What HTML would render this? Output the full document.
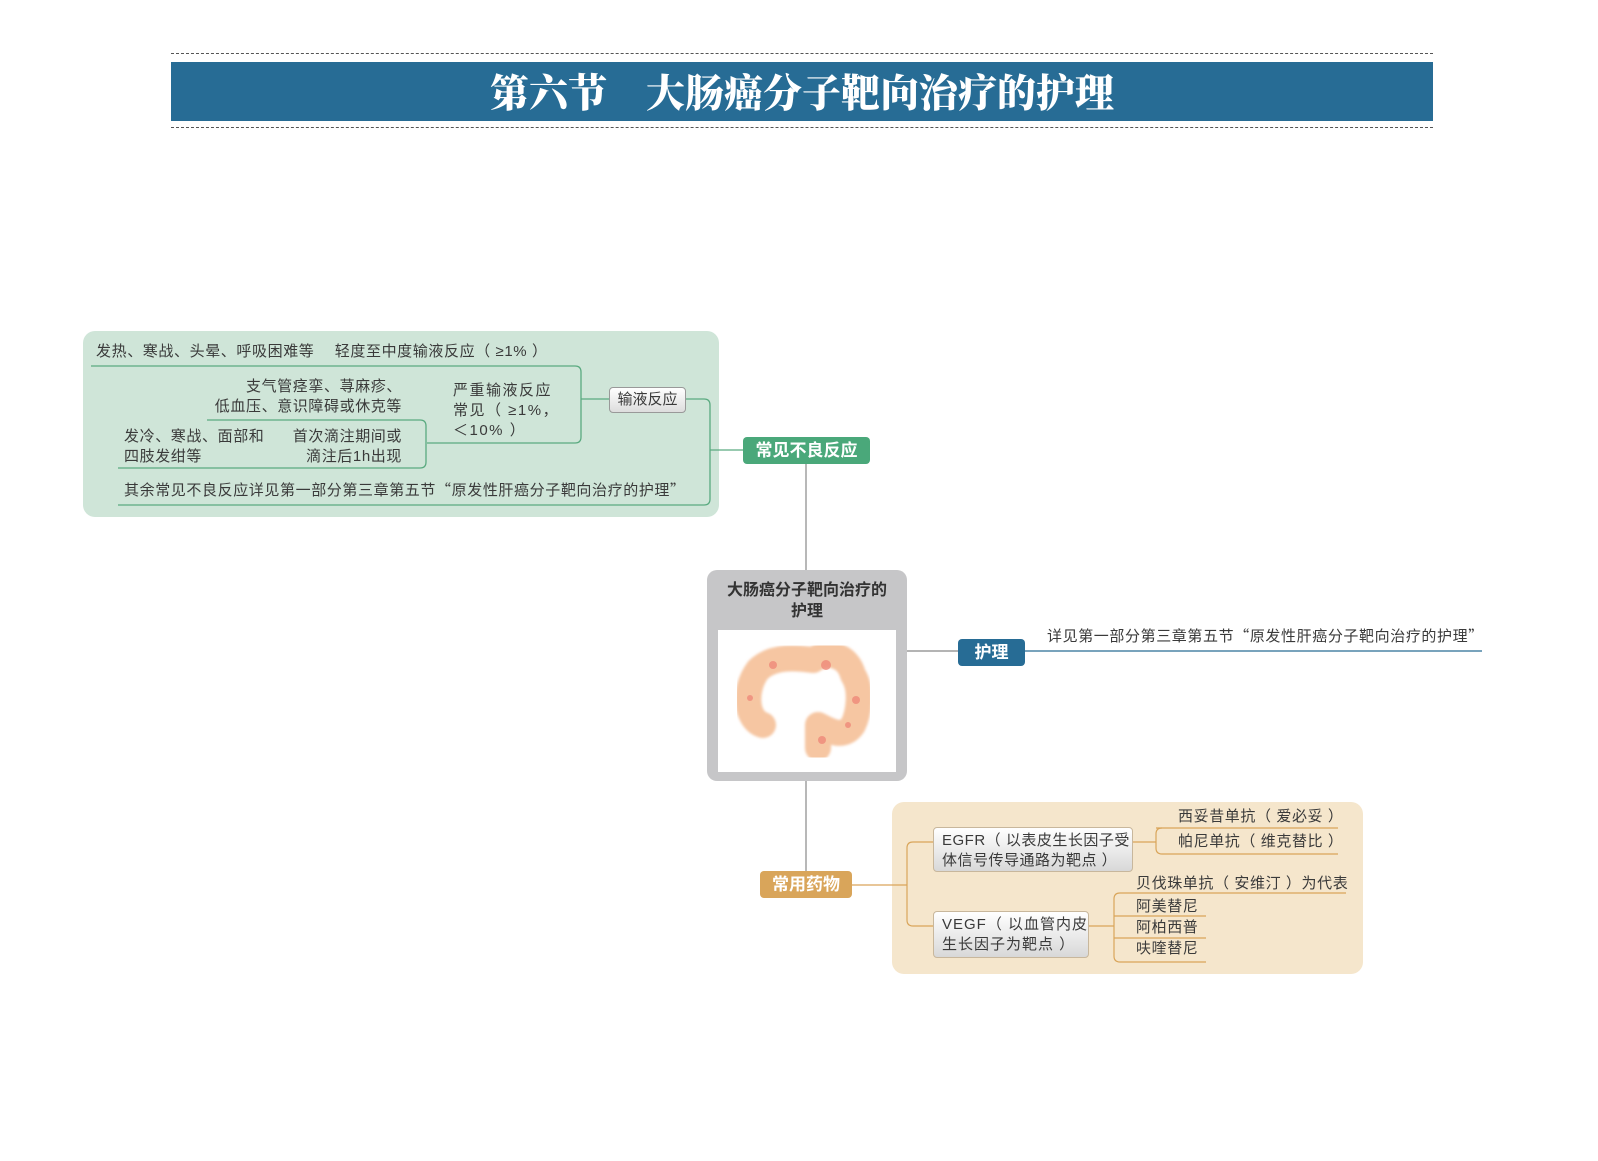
<!DOCTYPE html>
<html><head><meta charset="utf-8">
<style>
body{margin:0;width:1598px;height:1161px;background:#fff;position:relative;overflow:hidden;font-family:"Liberation Sans","Noto Sans CJK SC",sans-serif;color:#333}
.a{position:absolute;white-space:nowrap}
.t{font-size:15px;color:#3a3a3a;line-height:20px;letter-spacing:.6px}
.q{font-family:"Noto Sans CJK SC",sans-serif}
.node{position:absolute;color:#fff;font-weight:bold;font-size:17px;text-align:center;border-radius:4px}
</style></head><body>
<div class="a" style="left:171px;top:53px;width:1262px;border-top:1.5px dashed #555"></div>
<div class="a" style="left:171px;top:62px;width:1262px;height:59px;background:#276c95"></div>
<div class="a" style="left:171px;top:62px;width:1262px;height:59px;line-height:59px;text-align:center;color:#fff;font-family:'Noto Serif CJK SC',serif;font-weight:900;font-size:39px">第六节　大肠癌分子靶向治疗的护理</div>
<div class="a" style="left:171px;top:127px;width:1262px;border-top:1.5px dashed #555"></div>

<div class="a" style="left:83px;top:331px;width:636px;height:186px;background:#cfe5d8;border-radius:12px"></div>
<div class="a" style="left:892px;top:802px;width:471px;height:172px;background:#f5e6cc;border-radius:12px"></div>

<svg class="a" style="left:0;top:0" width="1598" height="1161">
<g fill="none" stroke="#5aaa80" stroke-width="1.3">
<path d="M91 366 H575 Q581 366 581 372 V437 Q581 443 575 443 H427"/>
<path d="M581 399 H609"/>
<path d="M207 420 H420 Q426 420 426 426 V462 Q426 468 420 468 H118"/>
<path d="M686 399 H704 Q710 399 710 405 V499 Q710 505 704 505 H118"/>
<path d="M710 450 H743"/>
</g>
<g fill="none" stroke="#888" stroke-width="1.2">
<path d="M806 464 V570"/><path d="M806 781 V871"/><path d="M907 651 H958"/>
</g>
<path d="M1025 651 H1482" stroke="#276c95" stroke-width="1.3"/>
<g fill="none" stroke="#d9a55a" stroke-width="1.2">
<path d="M852 885 H907"/>
<path d="M933 842 H913 Q907 842 907 848 V920 Q907 926 913 926 H933"/>
<path d="M1132 842 H1156"/>
<path d="M1156 828 H1338"/>
<path d="M1162 828 Q1156 828 1156 834 V848 Q1156 854 1162 854 H1338"/>
<path d="M1088 926 H1114"/>
<path d="M1120 893 H1346"/>
<path d="M1120 893 Q1114 893 1114 899 V956 Q1114 962 1120 962 H1206"/>
<path d="M1114 916 H1206"/><path d="M1114 938 H1206"/>
</g>
</svg>

<div class="a t" style="left:96px;top:342px">发热、寒战、头晕、呼吸困难等　  轻度至中度输液反应（ ≥1% ）</div>
<div class="a t" style="left:152px;top:377px;text-align:right;width:250px">支气管痉挛、荨麻疹、<br>低血压、意识障碍或休克等</div>
<div class="a t" style="left:453px;top:381px;letter-spacing:1.5px">严重输液反应<br>常见（ ≥1%，<br>＜10% ）</div>
<div class="a t" style="left:124px;top:427px">发冷、寒战、面部和<br>四肢发绀等</div>
<div class="a t" style="left:272px;top:427px;text-align:right;width:130px">首次滴注期间或<br>滴注后1h出现</div>
<div class="a t" style="left:124px;top:480px">其余常见不良反应详见第一部分第三章第五节<span class="q">“</span>原发性肝癌分子靶向治疗的护理<span class="q">”</span></div>
<div class="a t" style="left:609px;top:387px;width:75px;height:24px;line-height:24px;text-align:center;border:1px solid #999;border-radius:4px;background:linear-gradient(#fff,#ddd);letter-spacing:0">输液反应</div>

<div class="node" style="left:743px;top:437px;width:127px;height:27px;line-height:27px;background:#4aa87a">常见不良反应</div>
<div class="node" style="left:958px;top:639px;width:67px;height:27px;line-height:27px;background:#276c95">护理</div>
<div class="node" style="left:760px;top:871px;width:92px;height:27px;line-height:27px;background:#d9a55a">常用药物</div>
<div class="a t" style="left:1047px;top:626px">详见第一部分第三章第五节<span class="q">“</span>原发性肝癌分子靶向治疗的护理<span class="q">”</span></div>

<div class="a" style="left:707px;top:570px;width:200px;height:211px;background:#c6c6c8;border-radius:10px"></div>
<div class="a" style="left:707px;top:580px;width:200px;text-align:center;font-weight:bold;font-size:16px;line-height:21px;color:#333;white-space:normal">大肠癌分子靶向治疗的<br>护理</div>
<div class="a" style="left:718px;top:630px;width:178px;height:142px;background:#fff"></div>
<svg class="a" style="left:718px;top:630px" width="178" height="142">
<defs><filter id="b"><feGaussianBlur stdDeviation="1.2"/></filter></defs>
<g fill="none" stroke="#f6c6a2" stroke-width="26" stroke-linecap="round" stroke-linejoin="round" filter="url(#b)">
<path d="M45 95 C28 90 25 60 40 40 C55 25 80 28 95 30 C110 20 130 25 135 45 C145 60 140 85 135 95 C125 110 110 100 100 95 L100 118"/>
</g>
<g fill="#ef8a7a" opacity=".8"><circle cx="55" cy="35" r="4"/><circle cx="108" cy="35" r="5"/><circle cx="138" cy="70" r="4"/><circle cx="104" cy="110" r="4"/><circle cx="32" cy="68" r="3"/><circle cx="130" cy="95" r="3"/></g>
</svg>

<div class="a t" style="left:933px;top:827px;width:190px;height:40px;padding:3px 0 0 8px;border:1px solid #c8b79c;border-radius:4px;background:linear-gradient(#fff,#d8d8d8);white-space:normal;font-size:15px;letter-spacing:.5px">EGFR（ 以表皮生长因子受体信号传导通路为靶点 ）</div>
<div class="a t" style="left:933px;top:911px;width:146px;height:42px;padding:3px 0 0 8px;border:1px solid #c8b79c;border-radius:4px;background:linear-gradient(#fff,#d8d8d8);white-space:normal;font-size:15px;letter-spacing:1px">VEGF（ 以血管内皮生长因子为靶点 ）</div>
<div class="a t" style="left:1178px;top:807px">西妥昔单抗（ 爱必妥 ）</div>
<div class="a t" style="left:1178px;top:832px">帕尼单抗（ 维克替比 ）</div>
<div class="a t" style="left:1136px;top:874px">贝伐珠单抗（ 安维汀 ）为代表</div>
<div class="a t" style="left:1136px;top:897px">阿美替尼</div>
<div class="a t" style="left:1136px;top:918px">阿柏西普</div>
<div class="a t" style="left:1136px;top:939px">呋喹替尼</div>
</body></html>
